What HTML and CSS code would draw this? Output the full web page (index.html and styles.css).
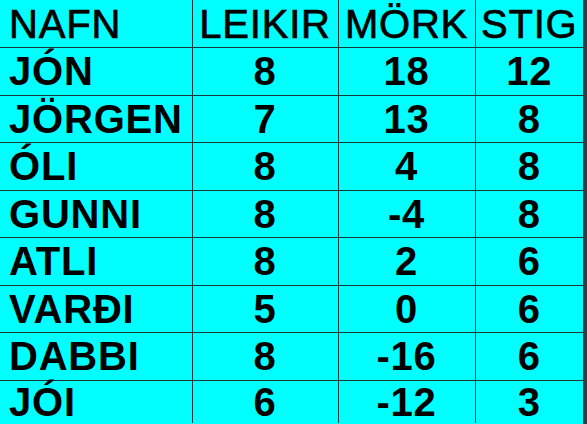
FILE: index.html
```html
<!DOCTYPE html>
<html lang="is">
<head>
<meta charset="utf-8">
<title>Stigatafla</title>
<link rel="stylesheet" href="styles.css">
</head>
<body>
<table class="score">
  <colgroup>
    <col class="c-name">
    <col class="c-games">
    <col class="c-goals">
    <col class="c-points">
  </colgroup>
  <thead>
    <tr class="row head"><th class="name">NAFN</th><th>LEIKIR</th><th>MÖRK</th><th>STIG</th></tr>
  </thead>
  <tbody>
    <tr class="row"><td class="name">JÓN</td><td>8</td><td>18</td><td>12</td></tr>
    <tr class="row"><td class="name">JÖRGEN</td><td>7</td><td>13</td><td>8</td></tr>
    <tr class="row"><td class="name">ÓLI</td><td>8</td><td>4</td><td>8</td></tr>
    <tr class="row"><td class="name">GUNNI</td><td>8</td><td>-4</td><td>8</td></tr>
    <tr class="row"><td class="name">ATLI</td><td>8</td><td>2</td><td>6</td></tr>
    <tr class="row"><td class="name">VARÐI</td><td>5</td><td>0</td><td>6</td></tr>
    <tr class="row"><td class="name">DABBI</td><td>8</td><td>-16</td><td>6</td></tr>
    <tr class="row last"><td class="name">JÓI</td><td>6</td><td>-12</td><td>3</td></tr>
  </tbody>
</table>
</body>
</html>
```

FILE: styles.css
```css
html, body {
  margin: 0;
  padding: 0;
  width: 587px;
  height: 424px;
  overflow: hidden;
}

html {
  background: linear-gradient(to right, #00ffff 583px, #2c3c48 583px);
}

.score {
  border-collapse: collapse;
  table-layout: fixed;
  width: 583px;
  background: #00ffff;
  font-family: "Liberation Sans", Arial, sans-serif;
  font-weight: bold;
  font-size: 40px;
  letter-spacing: 0.8px;
  color: #000;
}

.c-name { width: 192px; }
.c-games { width: 146px; }
.c-goals { width: 137px; }
.c-points { width: 108px; }

.score th,
.score td {
  border: 1px solid #1e3838;
  padding: 0;
  text-align: center;
  line-height: 1;
  font-weight: bold;
  white-space: nowrap;
}

.score th {
  font-weight: normal;
  -webkit-text-stroke: 0.7px #000;
}

.score tr:first-child th {
  border-top: none;
}

.score th:first-child,
.score td:first-child {
  border-left: none;
}

.score th:last-child,
.score td:last-child {
  border-right: none;
}

.row {
  height: 47.5px;
}

.row.last {
  height: 43px;
}

.row.last td {
  border-bottom: none;
  line-height: 40px;
}

.score .name {
  text-align: left;
  padding-left: 9px;
}
```
